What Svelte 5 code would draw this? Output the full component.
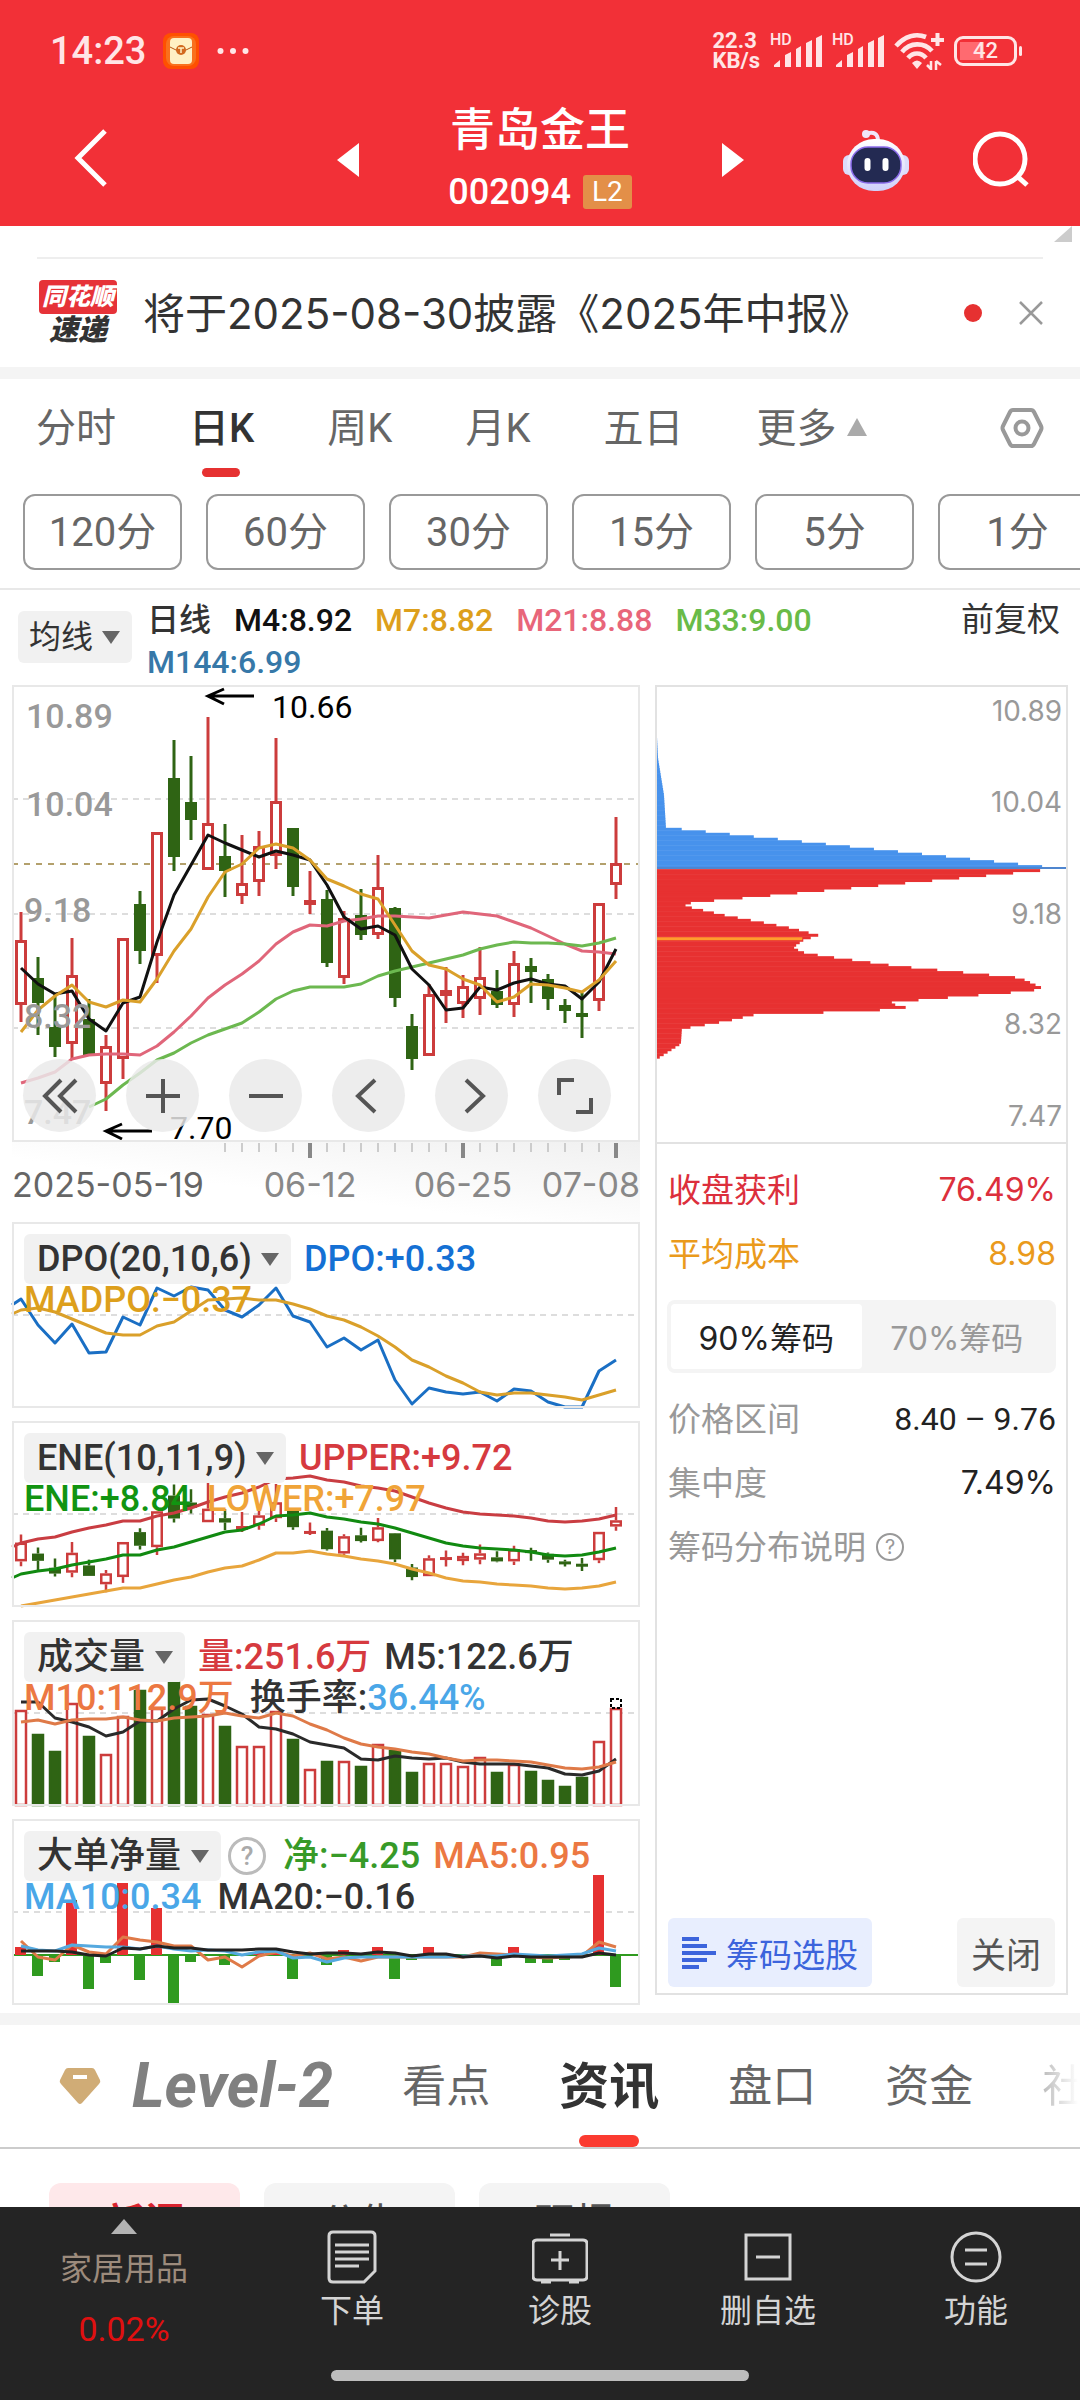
<script lang="ts">
  type Candle = [up: number, high: number, top: number, bottom: number, low: number];

  const STEP = 17;
  const FIRST = 9;
  const x = (i: number) => FIRST + i * STEP;

  // up flag, then high / body top / body bottom / low in chart units
  const candles: Candle[] = [
    [1, 227, 255, 320, 337], [0, 272, 293, 318, 350], [0, 310, 342, 362, 372], [1, 253, 290, 359, 375],
    [0, 314, 334, 370, 370], [1, 350, 361, 399, 426], [1, 253, 253, 374, 394], [0, 206, 219, 266, 279],
    [1, 147, 147, 271, 298], [0, 55, 93, 172, 186], [0, 71, 117, 135, 155], [1, 32, 138, 185, 185],
    [0, 139, 171, 186, 212], [1, 150, 198, 211, 219], [1, 146, 161, 197, 211], [1, 53, 116, 171, 184],
    [0, 143, 143, 202, 211], [1, 186, 215, 220, 229], [0, 205, 214, 278, 282], [1, 226, 233, 293, 299],
    [0, 204, 230, 250, 255], [1, 170, 202, 250, 254], [0, 222, 223, 313, 322], [0, 329, 341, 374, 385],
    [1, 299, 309, 371, 371], [1, 282, 305, 311, 338], [1, 290, 301, 319, 333], [1, 262, 292, 314, 330],
    [0, 285, 306, 320, 323], [1, 266, 278, 320, 332], [0, 273, 281, 287, 318], [0, 289, 294, 314, 325],
    [0, 314, 320, 326, 338], [0, 308, 328, 332, 353], [1, 218, 218, 316, 326], [1, 132, 178, 200, 214],
  ];

  const m4 = [283, 299, 309, 306, 334, 346, 318, 312, 257, 210, 180, 150, 158, 165, 172, 166, 170, 175, 200, 232, 244, 241, 250, 284, 300, 325, 323, 302, 305, 298, 294, 299, 301, 314, 297, 264];
  const m7 = [347, 325, 311, 300, 317, 322, 315, 317, 294, 266, 244, 212, 187, 179, 163, 159, 163, 175, 194, 201, 209, 214, 240, 266, 280, 284, 294, 300, 317, 312, 299, 300, 303, 307, 295, 276];
  const m21 = [398, 393, 387, 374, 370, 369, 369, 370, 361, 347, 331, 313, 300, 289, 276, 259, 247, 240, 241, 236, 234, 231, 231, 232, 233, 230, 227, 229, 231, 237, 243, 251, 259, 266, 267, 269];
  const m33 = [422, 414, 400, 388, 375, 368, 358, 350, 344, 338, 327, 314, 306, 302, 302, 302, 299, 291, 286, 282, 278, 274, 270, 264, 260, 257, 258, 258, 259, 261, 258, 253];

  const dpo = [77, 103, 121, 102, 131, 130, 95, 103, 66, 74, 65, 68, 88, 95, 83, 66, 94, 100, 125, 116, 128, 118, 158, 182, 166, 170, 172, 170, 179, 167, 169, 180, 185, 185, 149, 138];
  const madpo = [88, 86, 90, 97, 104, 111, 113, 113, 104, 100, 89, 78, 77, 76, 78, 78, 82, 87, 94, 98, 105, 114, 125, 138, 145, 154, 161, 170, 173, 171, 171, 173, 175, 178, 173, 168];

  const upper = [122, 118, 116, 111, 107, 104, 100, 100, 95, 92, 87, 81, 76, 72, 66, 58, 57, 55, 59, 61, 65, 67, 70, 76, 82, 87, 91, 93, 94, 95, 97, 100, 101, 100, 98, 94];
  const ene = [153, 150, 148, 144, 141, 138, 134, 134, 129, 126, 121, 116, 111, 109, 103, 95, 94, 92, 96, 98, 101, 103, 107, 112, 117, 122, 125, 127, 128, 129, 131, 134, 135, 134, 131, 127];
  const lower = [185, 182, 179, 176, 173, 170, 167, 167, 163, 159, 156, 151, 147, 145, 139, 132, 132, 130, 133, 135, 138, 140, 143, 148, 152, 157, 160, 161, 163, 164, 165, 167, 168, 167, 165, 161];

  const volume = [90, 114, 131, 83, 116, 134, 96, 70, 88, 56, 86, 94, 106, 126, 126, 91, 119, 149, 141, 141, 146, 124, 130, 152, 143, 143, 146, 137, 152, 144, 151, 160, 166, 157, 121, 88];
  const vol5 = [82, 82, 98, 102, 107, 116, 112, 101, 101, 89, 80, 79, 86, 94, 107, 109, 114, 122, 125, 128, 139, 140, 136, 138, 139, 138, 142, 144, 144, 144, 146, 148, 154, 155, 151, 139];
  const vol10 = [102, 100, 104, 100, 99, 99, 97, 100, 101, 98, 97, 96, 93, 96, 98, 93, 96, 104, 110, 118, 124, 127, 129, 132, 134, 138, 141, 140, 140, 141, 142, 145, 148, 149, 147, 142];

  const ZERO = 136;
  const net = [128, 157, 143, 81, 170, 144, 64, 161, 89, 185, 143, 136, 146, 136, 134, 133, 160, 136, 146, 131, 134, 128, 160, 141, 128, 138, 136, 134, 147, 128, 144, 144, 141, 138, 56, 168];
  const net5 = [122, 138, 141, 126, 133, 135, 118, 121, 123, 127, 127, 141, 138, 148, 137, 133, 137, 134, 140, 138, 142, 138, 138, 138, 138, 138, 138, 134, 135, 136, 138, 139, 138, 137, 123, 128];
  const net10 = [127, 131, 132, 126, 127, 128, 128, 130, 127, 130, 132, 131, 132, 136, 133, 132, 139, 138, 143, 139, 138, 138, 138, 138, 138, 138, 137, 137, 137, 135, 136, 137, 136, 135, 129, 132];
  const net20 = [132, 132, 132, 133, 136, 137, 129, 130, 127, 129, 129, 131, 131, 131, 130, 130, 133, 135, 134, 134, 135, 133, 134, 137, 135, 135, 138, 137, 139, 137, 138, 138, 138, 138, 134, 136];

  // chip distribution outline as [y, width]
  const blueChips = [[49, 0], [70, 1], [107, 7], [140, 9], [141, 20], [179, 387]];
  const redChips = [
    [183, 385], [209, 103], [214, 46], [216, 30], [219, 28], [222, 42], [228, 68], [236, 110], [241, 135], [248, 162],
    [253, 147], [260, 137], [265, 145], [269, 167], [279, 240], [291, 365], [301, 387], [304, 375], [309, 310],
    [314, 251], [316, 231], [321, 252], [324, 210], [326, 153], [328, 97], [334, 71], [342, 25], [357, 24], [371, 2],
  ];

  function line(values: number[], start = 0) {
    return values.map((v, i) => `${x(i + start)},${v}`).join(" ");
  }

  function bars(outline: number[][]) {
    const rows: { y: number; w: number }[] = [];
    const last = outline[outline.length - 1][0];
    let k = 0;
    for (let y = outline[0][0]; y <= last; y += 2.5) {
      while (k < outline.length - 2 && outline[k + 1][0] < y) k++;
      const [y0, w0] = outline[k];
      const [y1, w1] = outline[k + 1];
      rows.push({ y, w: w0 + ((w1 - w0) * (y - y0)) / (y1 - y0) });
    }
    return rows;
  }

  const periods = ["分时", "日K", "周K", "月K", "五日"];
  const minutes = ["120分", "60分", "30分", "15分", "5分", "1分"];
  const averages = [
    { text: "M4:8.92", tone: "black" },
    { text: "M7:8.82", tone: "gold" },
    { text: "M21:8.88", tone: "pink" },
    { text: "M33:9.00", tone: "lime" },
    { text: "M144:6.99", tone: "steel" },
  ];
  const priceLabels = [["10.89", 14, 43], ["10.04", 14, 131], ["9.18", 12, 237], ["8.32", 12, 343], ["7.47", 12, 439]] as const;
  const chipLabels = [["10.89", 34], ["10.04", 126], ["9.18", 238], ["8.32", 349], ["7.47", 441]] as const;
  const ticks = Array.from({ length: 24 }, (_, i) => i + 12);

  let period = $state("日K");
  let range = $state("90");
</script>

{#snippet candleSet(scale: number, shift: number, w: number, stroke: number)}
  {#each candles as [up, high, top, bottom, low], i}
    {@const t = top * scale + shift}
    {@const b = bottom * scale + shift}
    <g class={up ? "up" : "down"}>
      <path d={`M${x(i)} ${high * scale + shift}V${t}M${x(i)} ${b}V${low * scale + shift}`} stroke-width={stroke} />
      <rect x={x(i) - w / 2 + stroke / 2} y={t + stroke / 2} width={w - stroke} height={Math.max(b - t - stroke, 0.5)} stroke-width={stroke} />
    </g>
  {/each}
{/snippet}

{#snippet pick(label: string, name: string)}
  <span class="pick">
    <select aria-label={name}><option>{label}</option></select>
  </span>
{/snippet}

{#snippet signal()}
  <span class="signal">
    <small>HD</small>
    <svg viewBox="0 0 50 34" width="50" height="34" aria-hidden="true">
      <path d="M2 33v-2l6-5v7zM13 33V21l6-3v15zM24 33V15l5-3v21zM34 33V9l6-3v27zM44 33V4l6-3v32z" />
    </svg>
  </span>
{/snippet}

<div class="app">
  <header>
    <div class="status">
      <time>14:23</time>
      <svg class="packet" viewBox="0 0 36 36" width="36" height="36" aria-hidden="true">
        <rect width="36" height="36" rx="8" fill="#ff5000" />
        <rect x="3" y="3" width="30" height="30" rx="8" fill="#f9701c" />
        <rect x="7" y="5" width="22" height="26" rx="4" fill="#fff0c4" />
        <path d="M7 14l8 4h6l8-4" fill="none" stroke="#b85412" />
        <circle cx="18" cy="17" r="5" fill="#d2691e" />
        <path d="M15 15h6M18 15v5" stroke="#fff0c4" stroke-width="1.5" />
      </svg>
      <svg viewBox="0 0 32 8" width="32" height="8" aria-hidden="true" fill="#ffe5e6">
        <circle cx="3.5" cy="4" r="3" /><circle cx="16" cy="4" r="3" /><circle cx="28.5" cy="4" r="3" />
      </svg>
      <div class="system">
        <b class="speed"><span>22.3</span><span>KB/s</span></b>
        {@render signal()}
        {@render signal()}
        <svg viewBox="0 0 50 38" width="50" height="38" aria-hidden="true">
          <g fill="none" stroke="#ffe5e6" stroke-width="4.6">
            <path d="M2 14C11 4 22 1 32 5" />
            <path d="M8 20C16 10 30 10 38 19" />
            <path d="M14 26C19 20 27 20 32 26" />
            <path d="M37 8h13M43.500 1v13" stroke-width="4" />
          </g>
          <path d="M18 31q5-5 10 0l-5 6z" fill="#ffe5e6" />
          <path d="M37 29v9M37 37l-4-4M42 38v-9M42 29l5 4" fill="none" stroke="#ffe5e6" stroke-width="2.5" />
        </svg>
        <span class="battery">42</span>
      </div>
    </div>

    <nav class="top">
      <button class="back" aria-label="返回">
        <svg viewBox="0 0 34 60" width="34" height="60"><path d="M31 3L4 30l27 27" /></svg>
      </button>
      <div class="stock">
        <button aria-label="上一只"><svg viewBox="0 0 22 34" width="22" height="34"><path class="solid" d="M22 0v34L0 17z" /></svg></button>
        <div class="name">
          <h1>青岛金王</h1>
          <p>002094 <span>L2</span></p>
        </div>
        <button aria-label="下一只"><svg viewBox="0 0 22 34" width="22" height="34"><path class="solid" d="M0 0v34l22-17z" /></svg></button>
      </div>
      <div class="tools">
        <button aria-label="助手">
          <svg viewBox="0 0 68 62" width="68" height="62">
            <defs>
              <linearGradient id="shell" x2="0" y2="1"><stop stop-color="#fff" /><stop offset="1" stop-color="#cfd0fa" /></linearGradient>
            </defs>
            <path d="M24 5c8-3 12 0 12 7" stroke="#f0e6fa" stroke-width="4" />
            <circle cx="24" cy="5" r="4" fill="#f0e6fa" />
            <rect x="1" y="26" width="12" height="20" rx="6" fill="#dcdcfb" />
            <rect x="55" y="26" width="12" height="20" rx="6" fill="#dcdcfb" />
            <rect x="5" y="10" width="58" height="52" rx="27" fill="url(#shell)" />
            <rect x="9" y="18" width="50" height="36" rx="17" fill="#232a52" stroke="#8a6bea" stroke-width="1.5" />
            <path d="M25.500 32v7M43.500 32v7" stroke="#fff" stroke-width="6" stroke-linecap="round" />
          </svg>
        </button>
        <button aria-label="搜索">
          <svg viewBox="0 0 58 58" width="58" height="58"><circle cx="27" cy="28" r="25" /><path d="M44 45l10 9" /></svg>
        </button>
      </div>
    </nav>
  </header>

  <main>
    <section class="notice">
      <svg class="corner" viewBox="0 0 18 16" width="18" height="16" aria-hidden="true"><path d="M18 0v16H0z" fill="#ccc" /></svg>
      <div class="notice-row">
        <span class="brand"><b>同花顺</b><i>速递</i></span>
        <a href="#notice">将于2025-08-30披露《2025年中报》</a>
        <span class="dot"></span>
        <button aria-label="关闭公告">
          <svg viewBox="0 0 24 24" width="24" height="24"><path d="M1 1l22 22M23 1L1 23" stroke="#999" stroke-width="2.500" /></svg>
        </button>
      </div>
    </section>

    <section class="periods">
      <div class="tabs">
        {#each periods as p}
          <button class:active={period === p} onclick={() => (period = p)}>{p}</button>
        {/each}
        <button class="more">更多<i></i></button>
        <button class="gear" aria-label="设置">
          <svg viewBox="0 0 44 42" width="44" height="42" fill="none" stroke="#999" stroke-width="4">
            <path d="M13 3h18q2 0 3 2l7 14q1 2 0 4l-7 14q-1 2-3 2H13q-2 0-3-2L3 23q-1-2 0-4l7-14q1-2 3-2z" />
            <circle cx="22" cy="21" r="6.500" />
          </svg>
        </button>
      </div>
      <div class="minutes">
        {#each minutes as m}<button>{m}</button>{/each}
      </div>
    </section>

    <section class="averages">
      {@render pick("均线", "主图指标")}
      <p class="legend">
        <b>日线</b>
        {#each averages as a}<span class={a.tone}>{a.text}</span>{/each}
      </p>
      <button class="adjust">前复权</button>
    </section>

    <section class="charts">
      <div class="left">
        <div class="panel">
          <svg viewBox="0 0 628 457" role="img" aria-label="日K线图">
            <path class="grid" d="M0 114H628M0 229H628M0 343H628" />
            <path d="M0 179H628" stroke="#b3a06c" stroke-width="2" stroke-dasharray="6 6" />
            {@render candleSet(1, 0, 12, 3)}
            <g class="lines">
              <polyline points={line(m21)} stroke="#e0667a" />
              <polyline points={line(m33, 4)} stroke="#6cb850" />
              <polyline points={line(m4)} stroke="#111" />
              <polyline points={line(m7)} stroke="#daa02a" />
            </g>
            <g class="price">
              {#each priceLabels as [label, lx, ly]}<text x={lx} y={ly}>{label}</text>{/each}
            </g>
            <g class="mark">
              <path d="M242 11H196M212 4l-16 7 16 8" />
              <text x="260" y="33">10.66</text>
              <path d="M140 446H94M110 439l-16 7 16 8" />
              <text x="158" y="454">7.70</text>
            </g>
          </svg>
          <div class="controls">
            <button aria-label="最早"><svg viewBox="0 0 38 38"><path d="M20 3L4 19l16 16M35 3L19 19l16 16" /></svg></button>
            <button aria-label="放大"><svg viewBox="0 0 38 38"><path d="M2 19h34M19 2v34" /></svg></button>
            <button aria-label="缩小"><svg viewBox="0 0 38 38"><path d="M2 19h34" /></svg></button>
            <button aria-label="左移"><svg viewBox="0 0 38 38"><path d="M25 3L8 19l17 16" /></svg></button>
            <button aria-label="右移"><svg viewBox="0 0 38 38"><path d="M13 3l17 16-17 16" /></svg></button>
            <button aria-label="全屏"><svg viewBox="0 0 38 38"><path d="M3 18V3h15M35 21v14H20" /></svg></button>
          </div>
        </div>

        <svg class="axis" viewBox="0 0 628 80" role="img" aria-label="日期轴">
          {#each ticks as i}
            {@const major = [17, 26, 35].includes(i)}
            <path d={`M${x(i)} 1V${major ? 16 : 10}`} stroke={major ? "#888" : "#ccc"} stroke-width={major ? 4 : 2} />
          {/each}
          <text x="0" y="55" fill="#666">2025-05-19</text>
          <text x="298" y="55" text-anchor="middle">06-12</text>
          <text x="451" y="55" text-anchor="middle">06-25</text>
          <text x="628" y="55" text-anchor="end">07-08</text>
        </svg>

        <div class="panel sub">
          <svg viewBox="0 0 628 186" role="img" aria-label="DPO">
            <path class="grid" d="M0 93H628" />
            <g class="lines">
              <polyline points={`0,83 ${line(dpo)}`} stroke="#1a6fc4" />
              <polyline points={`0,92 ${line(madpo)}`} stroke="#daa02a" />
            </g>
          </svg>
          <div class="readout">
            <div>{@render pick("DPO(20,10,6)", "副图一指标")}<span class="blue">DPO:+0.33</span></div>
            <div><span class="gold">MADPO:−0.37</span></div>
          </div>
        </div>

        <div class="panel sub">
          <svg viewBox="0 0 628 186" role="img" aria-label="ENE">
            <path class="grid" d="M0 93H628" />
            {@render candleSet(0.29, 47.6, 12, 2.5)}
            <g class="lines">
              <polyline points={`0,126 ${line(upper)}`} stroke="#c93d42" />
              <polyline points={`0,157 ${line(ene)}`} stroke="#118a11" />
              <polyline points={line(lower)} stroke="#e8a53c" />
            </g>
          </svg>
          <div class="readout">
            <div>{@render pick("ENE(10,11,9)", "副图二指标")}<span class="red">UPPER:+9.72</span></div>
            <div><span class="green">ENE:+8.84</span><span class="amber">LOWER:+7.97</span></div>
          </div>
        </div>

        <div class="panel sub">
          <svg viewBox="0 0 628 186" role="img" aria-label="成交量">
            <path class="grid" d="M0 93H628" />
            {#each volume as top, i}
              <g class={candles[i][0] ? "up" : "down"}>
                <rect x={x(i) - 5} y={top + 1} width="10" height={184 - top} stroke-width="2.500" />
              </g>
            {/each}
            <rect x={x(35) - 5} y="79" width="10" height="9" fill="none" stroke="#000" stroke-width="2" stroke-dasharray="3 2" />
            <g class="lines">
              <polyline points={line(vol5)} stroke="#2a2a2a" />
              <polyline points={line(vol10)} stroke="#df7a48" />
            </g>
          </svg>
          <div class="readout">
            <div>{@render pick("成交量", "副图三指标")}<span class="red">量:251.6万</span><span class="dark">M5:122.6万</span></div>
            <div><span class="orange">M10:112.9万</span><span class="dark">换手率:<em>36.44%</em></span></div>
          </div>
        </div>

        <div class="panel sub">
          <svg viewBox="0 0 628 186" role="img" aria-label="大单净量">
            <path class="grid" d="M0 93H628" />
            <path d="M0 136H628" stroke="#2f9a1f" stroke-width="2" />
            {#each net as v, i}
              <rect x={x(i) - 6} y={Math.min(v, ZERO)} width="11" height={Math.abs(v - ZERO)} fill={v < ZERO ? "#e63131" : "#2f9a1f"} />
            {/each}
            <g class="lines">
              <polyline points={line(net5)} stroke="#df7a48" />
              <polyline points={line(net10)} stroke="#55a9df" />
              <polyline points={line(net20)} stroke="#222" />
            </g>
          </svg>
          <div class="readout">
            <div>
              {@render pick("大单净量", "副图四指标")}
              <button class="help" aria-label="说明">?</button>
              <span class="leaf">净:−4.25</span><span class="orange">MA5:0.95</span>
            </div>
            <div><span class="sky">MA10:0.34</span><span class="dark">MA20:−0.16</span></div>
          </div>
        </div>
      </div>

      <aside>
        <svg class="chips" viewBox="0 0 411 457" role="img" aria-label="筹码分布">
          {#each bars(blueChips) as r}<rect x="0" y={r.y} width={r.w} height="3" fill="#4792ec" />{/each}
          {#each bars(redChips) as r}<rect x="0" y={r.y} width={r.w} height="3" fill="#e73131" />{/each}
          <path d="M0 182H411" stroke="#4f86cf" stroke-width="2" />
          <path d="M0 253H146" stroke="#ff9d2e" stroke-width="3" />
          {#each chipLabels as [label, ly]}<text x="407" y={ly}>{label}</text>{/each}
        </svg>
        <dl>
          <div class="red"><dt>收盘获利</dt><dd>76.49%</dd></div>
          <div class="cost"><dt>平均成本</dt><dd>8.98</dd></div>
        </dl>
        <div class="switch">
          <button class:active={range === "90"} onclick={() => (range = "90")}>90%筹码</button>
          <button class:active={range === "70"} onclick={() => (range = "70")}>70%筹码</button>
        </div>
        <dl class="muted">
          <div><dt>价格区间</dt><dd class="narrow">8.40 – 9.76</dd></div>
          <div><dt>集中度</dt><dd>7.49%</dd></div>
          <div><dt>筹码分布说明 <button class="help small" aria-label="筹码分布说明">?</button></dt></div>
        </dl>
        <div class="actions">
          <button class="choose">
            <svg viewBox="0 0 34 34" width="34" height="34" aria-hidden="true"><path d="M0 3h17M0 10h25M0 17h34M0 24h25M0 31h17" /></svg>
            筹码选股
          </button>
          <button class="close">关闭</button>
        </div>
      </aside>
    </section>

    <section class="news">
      <div class="news-tabs">
        <svg viewBox="0 0 42 38" width="42" height="38" aria-hidden="true">
          <path d="M9 1h24q2 0 3 2l5 10q1 2-1 4L23 36q-2 2-4 0L2 17q-2-2-1-4L6 3q1-2 3-2z" fill="#d0ac76" />
          <path d="M14 10h14" stroke="#fff" stroke-width="4" />
        </svg>
        <button class="level">Level-2</button>
        <button>看点</button>
        <button class="active">资讯</button>
        <button>盘口</button>
        <button>资金</button>
        <button class="fade">社区</button>
      </div>
      <div class="news-chips">
        <button class="active">新闻</button>
        <button>公告</button>
        <button>研报</button>
      </div>
    </section>
  </main>

  <footer>
    <nav>
      <a class="sector" href="#sector">
        <svg viewBox="0 0 26 15" width="26" height="15" aria-hidden="true"><path d="M13 0l13 15H0z" fill="#b3b3b3" /></svg>
        <span>家居用品</span>
        <strong>0.02%</strong>
      </a>
      <button>
        <svg viewBox="0 0 56 56" width="56" height="56"><path d="M9 3h38q4 0 4 4v35L40 53H9q-4 0-4-4V7q0-4 4-4zM11 16h34M11 23h34M11 30h34M11 37h24" /></svg>
        下单
      </button>
      <button>
        <svg viewBox="0 0 56 56" width="56" height="56"><path d="M18 6h20M5 11h46q4 0 4 4v32q0 4-4 4H5q-4 0-4-4V15q0-4 4-4zM9 53h10M37 53h10M19 31h18M28 22v19" /></svg>
        诊股
      </button>
      <button>
        <svg viewBox="0 0 56 56" width="56" height="56"><path d="M6 6h44v44H6zM16 28h24" /></svg>
        删自选
      </button>
      <button>
        <svg viewBox="0 0 56 56" width="56" height="56"><circle cx="28" cy="28" r="24" /><path d="M17 21h22M17 35h22" /></svg>
        功能
      </button>
    </nav>
    <div class="home"></div>
  </footer>
</div>

<style>
  :global(body){margin:0;background:#fff}
  .app{display:flex;flex-direction:column;height:100vh;overflow:hidden;background:#fff;color:#333;font-family:Inter,"Noto Sans CJK SC",sans-serif}
  .app *{box-sizing:border-box}
  button,select{margin:0;padding:0;border:0;background:none;color:inherit;font:inherit;white-space:nowrap}
  a{color:inherit;text-decoration:none}
  h1,p,dl,dd{margin:0}
  svg{display:block;flex:none}

  header{flex:none;background:#f23037;color:#fff}
  .status{display:flex;align-items:center;height:102px;padding:0 63px 0 50px;color:#ffe5e6}
  time{font:500 38px/1 Roboto,sans-serif}
  .packet{margin:0 18px 0 17px}
  .system{display:flex;align-items:center;gap:10px;margin-left:auto}
  .speed{display:flex;flex-direction:column;font:700 22px/20px Roboto,sans-serif}
  .signal{position:relative;padding-left:2px}
  .signal path{fill:#ffe5e6}
  .signal small{position:absolute;left:0;top:-2px;font:500 16px/16px Roboto,sans-serif}
  .battery{position:relative;width:63px;height:30px;border:3px solid #ffe5e6;border-radius:9px;background:linear-gradient(90deg,#ff6a70 24px,transparent 24px) 3px 3px/54px 18px no-repeat;font:500 22px/24px Roboto,"Noto Sans",sans-serif;text-align:center}
  .battery::after{content:"";position:absolute;right:-8px;top:7px;width:3px;height:10px;border-radius:2px;background:#ffe5e6}

  .top{display:grid;grid-template-columns:1fr 407px 1fr;align-items:center;height:124px}
  .top svg{fill:none;stroke:#fff;stroke-width:5}
  .top .solid{fill:#fff;stroke:none}
  .top button{padding-bottom:8px}
  .back{justify-self:start;padding-left:74px}
  .top .back{padding-bottom:12px}
  .stock{display:flex;align-items:center;justify-content:space-between}
  .name{text-align:center}
  h1{font-size:45px;line-height:56px;font-weight:500}
  .name p{display:flex;align-items:center;gap:12px;font:500 36px/68px Roboto,sans-serif}
  .name span{padding:0 9px;border-radius:3px;background:#e38f48;font-size:28px;line-height:34px;font-weight:400}
  .tools{display:flex;justify-content:flex-end;gap:63px;padding-right:49px}
  .tools button:first-child svg{stroke:none}

  main{flex:1;min-height:0;overflow:hidden}
  .notice{position:relative;padding:31px 37px 0;border-bottom:12px solid #f4f4f4}
  .corner{position:absolute;top:0;right:8px}
  .notice-row{display:flex;align-items:center;height:110px;border-top:2px solid #eee}
  .brand{display:flex;flex-direction:column;align-items:center;width:82px;margin-right:24px;font-style:italic;line-height:1}
  .brand b{width:78px;border-radius:4px;background:#e63238;color:#fff;font-size:24px;line-height:34px;font-weight:900;text-align:center}
  .brand i{font-size:29px;line-height:32px;font-weight:900}
  .notice a{padding-bottom:6px;font-size:42px}
  .dot{width:18px;height:18px;margin:0 37px 0 auto;border-radius:50%;background:#e63131}

  .tabs{display:flex;align-items:flex-start;gap:73px;height:98px;padding:0 36px}
  .tabs button{position:relative;color:#666;font-size:40px;line-height:100px;font-family:Roboto,"Noto Sans CJK SC",sans-serif}
  .tabs .active{color:#333;font-weight:500}
  .tabs .active::after{content:"";position:absolute;left:50%;bottom:2px;width:38px;height:9px;margin-left:-20px;border-radius:5px;background:#e63131}
  .more i{display:inline-block;margin:0 0 6px 10px;border:10px solid transparent;border-top:0;border-bottom:18px solid #aaa}
  .tabs .gear{margin:28px 0 0 auto}
  .minutes{display:flex;gap:24px;margin-top:17px;padding:0 23px 18px;overflow:hidden;border-bottom:2px solid #e8e8e8}
  .minutes button{flex:none;width:159px;height:76px;border:2px solid #999;border-radius:12px;color:#666;font:40px/74px Roboto,"Noto Sans CJK SC",sans-serif}

  .pick{position:relative;display:inline-flex;flex:none;border-radius:6px;background:#f1f1f1}
  .pick select{appearance:none;padding:0 39px 0 13px;color:#333}
  .pick::after{content:"";position:absolute;right:12px;top:50%;margin-top:-6px;border:9px solid transparent;border-bottom:0;border-top:13px solid #666;pointer-events:none}
  .averages{display:flex;align-items:flex-start;height:95px;padding:9px 20px 0 18px;font:32px/42px Roboto,"Noto Sans CJK SC",sans-serif}
  .averages .pick{margin:12px 15px 0 0}
  .averages select{height:52px;padding:0 38px 0 11px}
  .legend{display:flex;flex:1;flex-wrap:wrap;column-gap:23px}
  .legend b,.legend span{font-weight:500}
  .adjust{font-size:33px}

  .charts{display:grid;grid-template-columns:628fr 413fr;gap:15px;padding:0 12px 8px}
  .left{display:flex;flex-direction:column}
  .panel{position:relative;outline:2px solid #e8e8e8;outline-offset:-2px}
  .left svg{width:100%;height:auto}
  .panel > svg{overflow:visible}
  .grid{stroke:#ddd;stroke-width:2;stroke-dasharray:6 5}
  .up{fill:#fff;stroke:#cc3c3c}
  .down{fill:#2f6414;stroke:#2f6414}
  .lines{fill:none;stroke-width:3;stroke-linejoin:round}
  .price{fill:#999;font:500 34px Roboto,sans-serif}
  .mark{font:32px Roboto,sans-serif}
  .mark path{fill:none;stroke:#000;stroke-width:3}
  .controls{position:absolute;left:11px;right:29px;bottom:10px;display:flex;justify-content:space-between}
  .controls button{display:grid;place-items:center;width:73px;height:73px;border-radius:50%;background:rgba(233,233,233,.84)}
  .controls svg{width:38px;height:38px;fill:none;stroke:#555;stroke-width:4}
  .axis{background:linear-gradient(to top right,#fff 40%,#f0f0f0);font:34px Inter,sans-serif;fill:#888}
  .sub + .sub{margin-top:13px}
  .readout{position:absolute;left:12px;top:12px;font:500 36px/50px Roboto,"Noto Sans CJK SC",sans-serif;white-space:nowrap}
  .readout div{display:flex;align-items:center;gap:13px;height:50px}
  .readout div + div{gap:16px;height:32px}
  .readout select{height:50px}
  .help{width:38px;height:38px;border:3px solid #bbb;border-radius:50%;color:#aaa;font-size:26px;line-height:32px}
  .readout .help{margin:0 4px 0 -6px}
  .readout em{color:#4aa7e8;font-style:normal}
  .black{color:#111}.dark{color:#333}.gold{color:#dd9f1c}.pink{color:#e8667a}.lime{color:#69bb48}.steel{color:#3678a8}
  .blue{color:#1470d4}.red{color:#d63a3f}.green{color:#119411}.amber{color:#f0a438}.orange{color:#ec7842}.leaf{color:#379a28}.sky{color:#4aa7e8}

  aside{display:flex;flex-direction:column;margin-bottom:10px;border:2px solid #e2e2e2;font-size:33px}
  .chips{width:100%;height:auto;border-bottom:2px solid #e2e2e2}
  .chips text{fill:#999;font-size:28px;text-anchor:end}
  dl{padding:14px 10px 0 11px}
  dl div{display:flex;align-items:center;justify-content:space-between;line-height:64px}
  dt{display:flex;align-items:center;gap:10px}
  dd{font-size:32px}
  dl .red{color:#dc2f3c}
  .cost{color:#ea9a1c}
  .muted{color:#999}
  .muted dd{color:#222}
  .narrow{font-family:Roboto,sans-serif}
  .help.small{width:28px;height:28px;border-width:2px;border-color:#999;color:#999;font-size:20px;line-height:22px}
  .switch{display:flex;margin:14px 10px 0;padding:4px;border-radius:8px;background:#f4f4f4}
  .switch button{flex:1;height:65px;border-radius:4px;color:#999;font-size:32px}
  .switch .active{background:#fff;color:#222}
  .actions{display:flex;justify-content:space-between;margin:auto 11px 6px}
  .actions button{display:flex;align-items:center;gap:10px;height:69px;padding:0 14px;border-radius:6px;background:#f4f4f4;color:#555}
  .actions .choose{background:#e8eefe;color:#3c64dc}
  .choose path{stroke:#3c64dc;stroke-width:4}
  .close{font-size:35px}

  .news{border-top:12px solid #f4f4f4}
  .news-tabs{display:flex;align-items:center;gap:69px;height:124px;padding-left:59px;overflow:hidden;border-bottom:2px solid #ccc}
  .news-tabs button{position:relative;flex:none;color:#666;font-size:44px;line-height:122px}
  .news-tabs .level{margin-left:-38px;color:#808080;font:italic 700 62px/122px Roboto,sans-serif}
  .news-tabs .active{color:#333;font-size:50px;font-weight:700}
  .news-tabs .active::after{content:"";position:absolute;left:50%;bottom:0;width:60px;height:12px;margin-left:-30px;border-radius:6px;background:#fb3b30}
  .news-tabs .fade{background:linear-gradient(90deg,#bbb,#fff 36px);background-clip:text;color:transparent}
  .news-chips{display:flex;gap:24px;padding:34px 49px}
  .news-chips button{width:191px;height:76px;border-radius:12px;background:#f4f4f4;color:#555;font-size:40px;line-height:80px}
  .news-chips .active{background:#fee8ea;color:#d8232e;font-weight:700}

  footer{flex:none;height:193px;background:#242424;color:#d4d4d4}
  footer nav{display:flex;height:163px}
  footer nav button{display:flex;flex:208;flex-direction:column;align-items:center;padding-top:22px;font-size:32px;line-height:50px}
  footer button svg{fill:none;stroke:#d4d4d4;stroke-width:3;margin-bottom:1px}
  .sector{display:flex;flex:248;flex-direction:column;align-items:center;padding-top:12px;color:#9c8b7c;font-size:32px;line-height:70px}
  .sector strong{color:#e01010;font:34px/50px Roboto,sans-serif}
  .home{width:418px;height:11px;margin:0 auto;border-radius:6px;background:#bdbdbd}
</style>
